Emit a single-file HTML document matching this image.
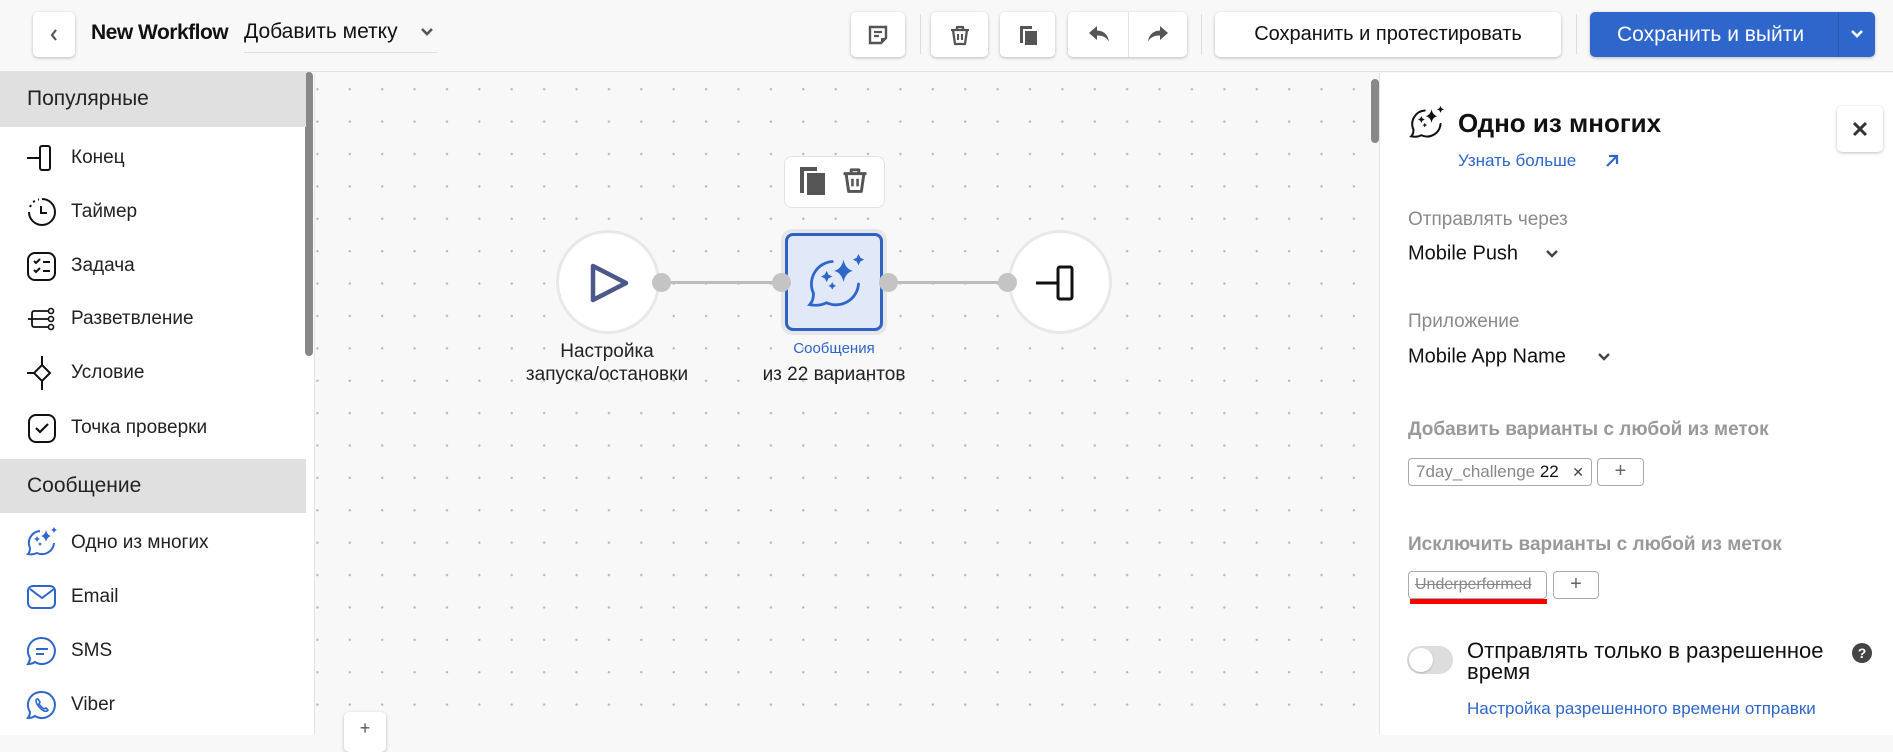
<!DOCTYPE html>
<html><head><meta charset="utf-8">
<style>
*{box-sizing:border-box;margin:0;padding:0}
body{width:1893px;height:734px;overflow:hidden;background:#f8f8f8;font-family:"Liberation Sans",Arial,sans-serif;color:#111;position:relative}
.a{position:absolute}
.btn{position:absolute;background:#fff;border-radius:5px;box-shadow:0 1px 3px rgba(0,0,0,.25);display:flex;align-items:center;justify-content:center}
.sep{position:absolute;top:14px;width:1px;height:40px;background:#ddd}
.item{position:absolute;left:71px;font-size:19px;color:#222;transform:translateY(-50%)}
.ic{position:absolute;left:26px;transform:translateY(-50%)}
.lbl{position:absolute;left:1408px;font-size:19px;color:#8a8a8a;transform:translateY(-50%)}
.val{position:absolute;left:1408px;font-size:20px;color:#111;transform:translateY(-50%)}
</style></head><body>
<div class="a" style="left:0;top:0;width:1893px;height:72px;background:#f8f8f8;border-bottom:1px solid #e2e2e2"></div>
<div class="btn" style="left:33px;top:12px;width:42px;height:45px"><svg width="12" height="16" viewBox="0 0 12 16"><path d="M8 3L4 8l4 5" stroke="#555" stroke-width="2.2" fill="none"/></svg></div>
<div class="a" style="left:91px;top:21px;font-size:21px;font-weight:bold;letter-spacing:-0.5px">New Workflow</div>
<div class="a" style="left:244px;top:20px;font-size:21px;color:#111">Добавить метку</div>
<svg class="a" style="left:420px;top:27px" width="14" height="10" viewBox="0 0 14 10"><path d="M2 2l5 5 5-5" stroke="#555" stroke-width="2.6" fill="none"/></svg>
<div class="a" style="left:244px;top:52px;width:193px;height:1px;background:#ddd"></div>

<div class="btn" style="left:851px;top:12px;width:54px;height:45px"><svg width="22" height="22" viewBox="0 0 22 22"><path d="M3 3h16v11l-5 5H3z" fill="none" stroke="#555" stroke-width="2.4"/><path d="M7 8h8M7 12h5" stroke="#555" stroke-width="2.2"/><path d="M14 19v-5h5" fill="#555"/></svg></div>
<div class="sep" style="left:920px"></div>
<div class="btn" style="left:931px;top:12px;width:57px;height:45px"><svg width="22" height="24" viewBox="0 0 22 24"><path d="M2 7h18M8 7V4h6v3M4 7l2 14h10l2-14" fill="none" stroke="#555" stroke-width="2.3" stroke-linejoin="round"/><path d="M9 11v6M13 11v6" stroke="#555" stroke-width="2"/></svg></div>
<div class="btn" style="left:1000px;top:12px;width:55px;height:45px"><svg width="22" height="22" viewBox="0 0 22 22"><path d="M3 2h12v3H6v14H3z" fill="#555"/><rect x="8" y="7" width="12" height="14" fill="#555"/></svg></div>
<div class="btn" style="left:1068px;top:12px;width:119px;height:45px"></div>
<div class="a" style="left:1128px;top:12px;width:1px;height:45px;background:#e4e4e4"></div>
<svg class="a" style="left:1087px;top:24px" width="24" height="20" viewBox="0 0 24 20"><path d="M10 2L2 9l8 7v-4.5c6 0 9 1.5 12 6-1-6-4-10.5-12-11z" fill="#555"/></svg>
<svg class="a" style="left:1146px;top:24px" width="24" height="20" viewBox="0 0 24 20"><path d="M14 2l8 7-8 7v-4.5c-6 0-9 1.5-12 6 1-6 4-10.5 12-11z" fill="#555"/></svg>
<div class="sep" style="left:1201px"></div>
<div class="btn" style="left:1215px;top:12px;width:346px;height:45px;font-size:20px;color:#111">Сохранить и протестировать</div>
<div class="sep" style="left:1576px"></div>
<div class="btn" style="left:1590px;top:12px;width:285px;height:45px;background:#2f66cc;justify-content:flex-start;padding-left:27px;font-size:21px;color:#fff">Сохранить и выйти</div>
<div class="a" style="left:1838px;top:12px;width:1px;height:45px;background:#2857b0"></div>
<svg class="a" style="left:1850px;top:29px" width="14" height="10" viewBox="0 0 14 10"><path d="M2 2l5 5 5-5" stroke="#fff" stroke-width="2.6" fill="none"/></svg>

<div class="a" style="left:0;top:73px;width:315px;height:662px;background:#fff;border-right:1px solid #e4e4e4"></div>
<div class="a" style="left:305px;top:72px;width:8px;height:284px;background:#888;border-radius:4px"></div>
<div class="a" style="left:0;top:72px;width:306px;height:55px;background:#e0e0e0"></div>
<div class="a" style="left:27px;top:87px;font-size:21px;color:#222">Популярные</div>
<svg class="ic" style="top:158px" width="32" height="32" viewBox="0 0 32 32"><path d="M1 16h14" stroke="#111" stroke-width="2"/><rect x="14" y="4" width="10" height="24" rx="2" fill="none" stroke="#111" stroke-width="2"/></svg><div class="item" style="top:158px">Конец</div>
<svg class="ic" style="top:212px" width="32" height="32" viewBox="0 0 32 32"><path d="M16 3a13 13 0 1 1-13 13" fill="none" stroke="#111" stroke-width="2"/><path d="M4 11l1-2M7 6l2-1M12 3.5h1" stroke="#111" stroke-width="2"/><path d="M15 10v7h6" fill="none" stroke="#111" stroke-width="2"/></svg><div class="item" style="top:212px">Таймер</div>
<svg class="ic" style="top:266px" width="32" height="32" viewBox="0 0 32 32"><rect x="2" y="3" width="27" height="27" rx="7" fill="none" stroke="#111" stroke-width="2"/><path d="M8 11l2 2 4-4M8 20l2 2 4-4M17 12h7M17 21h7" fill="none" stroke="#111" stroke-width="2"/></svg><div class="item" style="top:266px">Задача</div>
<svg class="ic" style="top:319px" width="32" height="32" viewBox="0 0 32 32"><path d="M2 16h12M8 8h16M8 24h16M8 16h16M8 8q-2 0-2 3v10q0 3 2 3" fill="none" stroke="#111" stroke-width="1.8"/><circle cx="25" cy="8" r="2.5" fill="#fff" stroke="#111" stroke-width="1.6"/><circle cx="25" cy="16" r="2.5" fill="#fff" stroke="#111" stroke-width="1.6"/><circle cx="25" cy="24" r="2.5" fill="#fff" stroke="#111" stroke-width="1.6"/></svg><div class="item" style="top:319px">Разветвление</div>
<svg class="ic" style="top:373px" width="32" height="36" viewBox="0 0 32 36"><path d="M1 18h7M16 1v9M16 26v9" stroke="#111" stroke-width="2"/><path d="M16 10l8 8-8 8-8-8z" fill="none" stroke="#111" stroke-width="2"/></svg><div class="item" style="top:373px">Условие</div>
<svg class="ic" style="top:428px" width="32" height="32" viewBox="0 0 32 32"><rect x="3" y="3" width="26" height="27" rx="7" fill="none" stroke="#111" stroke-width="2"/><path d="M10 16l4 4 8-8" fill="none" stroke="#111" stroke-width="2.2"/></svg><div class="item" style="top:428px">Точка проверки</div>
<div class="a" style="left:0;top:459px;width:306px;height:54px;background:#e0e0e0"></div>
<div class="a" style="left:27px;top:474px;font-size:21px;color:#222">Сообщение</div>
<svg class="ic" style="top:543px" width="32" height="32" viewBox="0 0 32 32"><path d="M14 4A12 12 0 0 0 4 21q0 4-2 6 5 1 9-1a12 12 0 0 0 17-10" fill="none" stroke="#2f66cc" stroke-width="2"/><path d="M20 3q1 5 5 6-4 1-5 6-1-5-5-6 4-1 5-6z" fill="#2f66cc"/><path d="M28 0l1 2 2 1-2 1-1 2-1-2-2-1 2-1z M11 9l1 2 2 1-2 1-1 2-1-2-2-1 2-1z M14 15l.7 1.3 1.3.7-1.3.7-.7 1.3-.7-1.3-1.3-.7 1.3-.7z" fill="#2f66cc"/></svg><div class="item" style="top:543px">Одно из многих</div>
<svg class="ic" style="top:597px" width="32" height="32" viewBox="0 0 32 32"><rect x="2" y="5" width="27" height="22" rx="5" fill="none" stroke="#2f66cc" stroke-width="2"/><path d="M4 8l12 9 12-9" fill="none" stroke="#2f66cc" stroke-width="2"/></svg><div class="item" style="top:597px">Email</div>
<svg class="ic" style="top:651px" width="32" height="32" viewBox="0 0 32 32"><path d="M16 3a13 13 0 1 1-7 24q-3 2-7 2 2-3 2-6A13 13 0 0 1 16 3z" fill="none" stroke="#2f66cc" stroke-width="2"/><path d="M10 14h12M10 19h8" stroke="#2f66cc" stroke-width="2"/></svg><div class="item" style="top:651px">SMS</div>
<svg class="ic" style="top:705px" width="32" height="32" viewBox="0 0 32 32"><path d="M16 3a13 13 0 1 1-7 24q-3 2-7 2 2-3 2-6A13 13 0 0 1 16 3z" fill="none" stroke="#2f66cc" stroke-width="2"/><path d="M11 10q-2 1 0 5 3 5 7 7 3 1 4-1l-2-2-2 1q-3-2-5-5l1-2-2-3z" fill="none" stroke="#2f66cc" stroke-width="1.6"/></svg><div class="item" style="top:705px">Viber</div>

<div class="a" style="left:315px;top:73px;width:1064px;height:662px;background-color:#f8f8f8;background-image:radial-gradient(circle,#b8b8b8 1px,transparent 1.4px);background-size:32.4px 32.4px;background-position:-13.8px 0"></div>
<div class="a" style="left:1371px;top:79px;width:8px;height:64px;background:#888;border-radius:4px"></div>
<div class="btn" style="left:344px;top:712px;width:42px;height:40px;font-size:18px;color:#555;align-items:flex-start;padding-top:6px">+</div>

<div class="a" style="left:661px;top:281px;width:120px;height:3px;background:#bdbdbd"></div>
<div class="a" style="left:888px;top:281px;width:120px;height:3px;background:#bdbdbd"></div>
<div class="a" style="left:556px;top:230px;width:104px;height:104px;border-radius:50%;background:#fff;border:3px solid #e8e8e8"></div>
<svg class="a" style="left:588px;top:262px" width="42" height="42" viewBox="0 0 42 42"><path d="M5 4L38 21 5 38z" fill="none" stroke="#4b5889" stroke-width="4.5" stroke-linejoin="round"/></svg>
<div class="a" style="left:652px;top:273px;width:19px;height:19px;border-radius:50%;background:#c4c4c4"></div>
<div class="a" style="left:507px;top:340px;width:200px;text-align:center;font-size:19px;line-height:23px;color:#222">Настройка<br>запуска/остановки</div>
<div class="a" style="left:781px;top:229px;width:106px;height:106px;border-radius:11px;background:#e6e6e6"></div>
<div class="a" style="left:785px;top:233px;width:98px;height:98px;border-radius:8px;background:#e1e8f8;border:3px solid #2f62c4"></div>
<svg class="a" style="left:806px;top:254px" width="60" height="60" viewBox="0 0 32 32"><path d="M14 4A12 12 0 0 0 4 21q0 4-2 6 5 1 9-1a12 12 0 0 0 17-10" fill="none" stroke="#2f66cc" stroke-width="1.5" stroke-linecap="round"/><path d="M20 3q1 5 5 6-4 1-5 6-1-5-5-6 4-1 5-6z" fill="#2f66cc"/><path d="M28 0l1 2 2 1-2 1-1 2-1-2-2-1 2-1z M11 9l1 2 2 1-2 1-1 2-1-2-2-1 2-1z M14 15l.7 1.3 1.3.7-1.3.7-.7 1.3-.7-1.3-1.3-.7 1.3-.7z" fill="#2f66cc"/></svg>
<div class="a" style="left:772px;top:273px;width:19px;height:19px;border-radius:50%;background:#c4c4c4"></div>
<div class="a" style="left:879px;top:273px;width:19px;height:19px;border-radius:50%;background:#c4c4c4"></div>
<div class="a" style="left:734px;top:340px;width:200px;text-align:center;font-size:15px;color:#2f66cc">Сообщения</div>
<div class="a" style="left:734px;top:364px;width:200px;text-align:center;font-size:19px;color:#222">из 22 вариантов</div>
<div class="a" style="left:784px;top:156px;width:101px;height:52px;background:#fff;border:1px solid #e3e3e3;border-radius:8px"></div>
<svg class="a" style="left:799px;top:166px" width="28" height="30" viewBox="0 0 28 30"><path d="M1 1h17v4H5v22H1z" fill="#555"/><rect x="8" y="7" width="18" height="22" fill="#555"/></svg>
<svg class="a" style="left:841px;top:164px" width="28" height="32" viewBox="0 0 22 24"><path d="M2 7h18M8 7V4h6v3M4 7l2 14h10l2-14" fill="none" stroke="#555" stroke-width="2.3" stroke-linejoin="round"/><path d="M9 11v6M13 11v6" stroke="#555" stroke-width="2"/></svg>
<div class="a" style="left:1008px;top:230px;width:104px;height:104px;border-radius:50%;background:#fff;border:3px solid #e8e8e8"></div>
<svg class="a" style="left:1036px;top:264px" width="44" height="38" viewBox="0 0 44 38"><path d="M0 19h22" stroke="#111" stroke-width="3"/><rect x="22" y="3" width="14" height="32" rx="2" fill="none" stroke="#111" stroke-width="3"/></svg>
<div class="a" style="left:998px;top:273px;width:19px;height:19px;border-radius:50%;background:#c4c4c4"></div>

<div class="a" style="left:1379px;top:73px;width:514px;height:662px;background:#fff;border-left:1px solid #e4e4e4"></div>
<svg class="a" style="left:1409px;top:106px" width="36" height="36" viewBox="0 0 32 32"><path d="M14 4A12 12 0 0 0 4 21q0 4-2 6 5 1 9-1a12 12 0 0 0 17-10" fill="none" stroke="#111" stroke-width="1.8" stroke-linecap="round"/><path d="M20 3q1 5 5 6-4 1-5 6-1-5-5-6 4-1 5-6z" fill="#111"/><path d="M28 0l1 2 2 1-2 1-1 2-1-2-2-1 2-1z M11 9l1 2 2 1-2 1-1 2-1-2-2-1 2-1z M14 15l.7 1.3 1.3.7-1.3.7-.7 1.3-.7-1.3-1.3-.7 1.3-.7z" fill="#111"/></svg>
<div class="a" style="left:1458px;top:108px;font-size:26px;font-weight:bold;color:#111">Одно из многих</div>
<div class="a" style="left:1458px;top:151px;font-size:17px;color:#2f66cc">Узнать больше</div>
<svg class="a" style="left:1604px;top:153px" width="16" height="16" viewBox="0 0 16 16"><path d="M3 13L13 3M5 3h8v8" fill="none" stroke="#2f66cc" stroke-width="2.2"/></svg>
<div class="btn" style="left:1837px;top:106px;width:46px;height:46px"><svg width="16" height="16" viewBox="0 0 16 16"><path d="M2 2l12 12M14 2L2 14" stroke="#333" stroke-width="3"/></svg></div>
<div class="lbl" style="top:220px">Отправлять через</div>
<div class="val" style="top:254px">Mobile Push</div>
<svg class="a" style="left:1545px;top:249px" width="14" height="10" viewBox="0 0 14 10"><path d="M2 2l5 5 5-5" stroke="#444" stroke-width="2.4" fill="none"/></svg>
<div class="lbl" style="top:322px">Приложение</div>
<div class="val" style="top:357px">Mobile App Name</div>
<svg class="a" style="left:1597px;top:352px" width="14" height="10" viewBox="0 0 14 10"><path d="M2 2l5 5 5-5" stroke="#444" stroke-width="2.4" fill="none"/></svg>
<div class="lbl" style="top:430px;font-weight:bold;color:#999">Добавить варианты с любой из меток</div>
<div class="a" style="left:1408px;top:458px;width:184px;height:28px;border:1px solid #aaa;border-radius:4px;font-size:17px;line-height:26px;padding-left:7px;color:#888;white-space:nowrap">7day_challenge <span style="color:#111">22</span><span style="position:absolute;right:7px;top:0;color:#444;font-size:14px">✕</span></div>
<div class="a" style="left:1597px;top:458px;width:47px;height:28px;border:1px solid #aaa;border-radius:4px;text-align:center;font-size:20px;line-height:25px;color:#666">+</div>
<div class="lbl" style="top:545px;font-weight:bold;color:#999">Исключить варианты с любой из меток</div>
<div class="a" style="left:1408px;top:571px;width:139px;height:28px;border:1px solid #aaa;border-radius:4px;font-size:16px;line-height:26px;padding-left:6px;color:#888;text-decoration:line-through;white-space:nowrap;overflow:hidden">Underperformed</div>
<div class="a" style="left:1410px;top:599px;width:137px;height:5px;background:#f00"></div>
<div class="a" style="left:1553px;top:571px;width:46px;height:28px;border:1px solid #aaa;border-radius:4px;text-align:center;font-size:20px;line-height:25px;color:#666">+</div>
<div class="a" style="left:1407px;top:646px;width:46px;height:28px;border-radius:14px;background:#ddd"></div>
<div class="a" style="left:1409px;top:648px;width:24px;height:24px;border-radius:50%;background:#fff;box-shadow:0 1px 2px rgba(0,0,0,.2)"></div>
<div class="a" style="left:1467px;top:640px;font-size:22px;line-height:21px;color:#111">Отправлять только в разрешенное<br>время</div>
<div class="a" style="left:1852px;top:643px;width:20px;height:20px;border-radius:50%;background:#444;color:#fff;font-size:14px;font-weight:bold;text-align:center;line-height:20px">?</div>
<div class="a" style="left:1467px;top:699px;font-size:17px;color:#2f66cc">Настройка разрешенного времени отправки</div>
</body></html>
